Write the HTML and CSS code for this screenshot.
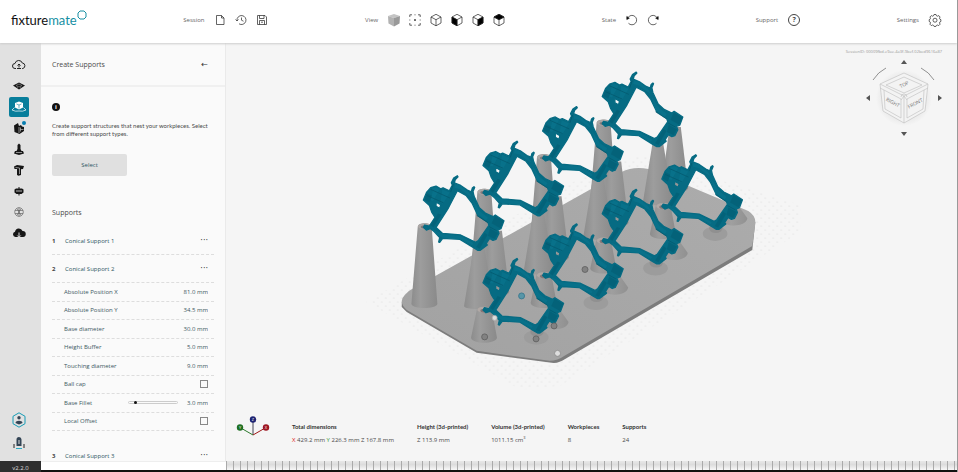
FILE: index.html
```
<!DOCTYPE html>
<html lang="en">
<head>
    <meta charset="UTF-8">
    <meta name="viewport" content="width=device-width, initial-scale=1.0">
    <title>fixturemate</title>
    <link rel="stylesheet" href="styles.css">
</head>
<body>

    <!-- Top bar -->
    <header class="topbar">
        <a class="logo" href="#">fixture<span>mate</span><svg width="10" height="10" viewBox="0 0 10 10"><path d="M3 1h4l2 2v4L7 9H3L1 7V3z"/></svg></a>

        <div class="tool-group">
            <span class="tool-label">Session</span>
            <button class="tool" aria-label="New session"><svg viewBox="0 0 12 12"><path d="M2.500 1.500h5l2.500 2.500v6.500h-7.500zM7.500 1.500V4H10"/></svg></button>
            <button class="tool" aria-label="History"><svg viewBox="0 0 12 12"><path d="M2 6.500A4.500 4.500 0 1 1 4 9.800M.5 5.500 2 7l1.500-1.500M6.500 3.500v2.700l2 1"/></svg></button>
            <button class="tool" aria-label="Save"><svg viewBox="0 0 12 12"><path d="M1.500 1.500h7.500l1.500 1.500v7.500h-9zM3.500 1.500V4.500h4.500v-3M3.500 10.500v-4h5v4M5 8.200h2"/></svg></button>
        </div>

        <div class="tool-group">
            <span class="tool-label">View</span>
            <button class="tool" aria-label="Shaded"><svg viewBox="0 0 12 12"><g stroke="none"><path fill="#c4c4c4" d="M0 2 6 0l6 2-6 2z"/><path fill="#b2b2b2" d="M0 2l6 2v8.500L.5 9.500z"/><path fill="#999" d="M12 2 6 4v8.500l5.500-3z"/></g></svg></button>
            <button class="tool" aria-label="Fit to screen"><svg viewBox="0 0 12 12"><path d="M.8 3V.8H3M9 .8h2.200V3M11.200 9v2.200H9M3 11.200H.8V9M5.500 .8h1M5.500 11.200h1M.8 5.500v1M11.200 5.500v1"/><circle cx="6" cy="6" r=".6" fill="#111"/></svg></button>
            <button class="tool" aria-label="Wireframe"><svg viewBox="0 0 12 12"><path d="M6 .3 11 3v6L6 11.800 1 9V3zM1 3l5 2.700L11 3M6 5.700v6"/></svg></button>
            <button class="tool" aria-label="Left view"><svg viewBox="0 0 12 12"><path d="M6 .3 11 3v6L6 11.800 1 9V3zM1 3l5 2.700L11 3M6 5.700v6"/><path fill="#000" d="M1 3l5 2.700v6L1 9z"/></svg></button>
            <button class="tool" aria-label="Right view"><svg viewBox="0 0 12 12"><path d="M6 .3 11 3v6L6 11.800 1 9V3zM1 3l5 2.700L11 3M6 5.700v6"/><path fill="#000" d="M11 3 6 5.700v6L11 9z"/></svg></button>
            <button class="tool" aria-label="Top view"><svg viewBox="0 0 12 12"><path d="M6 .3 11 3v6L6 11.800 1 9V3zM1 3l5 2.700L11 3M6 5.700v6"/><path fill="#000" d="M6 .3 11 3 6 5.700 1 3z"/></svg></button>
        </div>

        <div class="tool-group">
            <span class="tool-label">State</span>
            <button class="tool" aria-label="Undo"><svg viewBox="0 0 12 12"><path d="M2 3.500A4.700 4.700 0 1 1 2.500 9.300"/><path fill="#000" d="M.8 2.500v3l2.500-1.300z"/></svg></button>
            <button class="tool" aria-label="Redo"><svg viewBox="0 0 12 12"><path d="M10 3.500A4.700 4.700 0 1 0 9.500 9.300"/><path fill="#000" d="M11.200 2.500v3L8.700 4.200z"/></svg></button>
        </div>

        <div class="tool-group">
            <span class="tool-label">Support</span>
            <button class="tool help" aria-label="Help">?</button>
        </div>

        <div class="tool-group">
            <span class="tool-label">Settings</span>
            <button class="tool" aria-label="Settings"><svg viewBox="0 0 12 12"><path d="M5 .5h2l.5 1.300 1 .4 1.300-.6 1.300 1.400-.6 1.200.4 1 1 .5v1.700l-1 .5-.4 1 .6 1.300-1.400 1.400-1.200-.6-1 .4-.5 1H5l-.5-1-1-.4-1.200.6L.9 10.200l.6-1.300-.4-1-.9-.5V5.700l.9-.5.4-1L.9 3l1.400-1.400 1.200.6 1-.4z"/><circle cx="6" cy="6.200" r="2"/></svg></button>
        </div>
    </header>

    <!-- Workflow steps -->
    <nav class="rail">
        <button class="step" aria-label="Import"><svg viewBox="0 0 14 14"><path class="line" d="M4 10.500H3a2.500 2.500 0 0 1 0-5A3.800 3.800 0 0 1 10.300 5a2.800 2.800 0 0 1 .5 5.500H10M5 10.500h4M7 9.500V6.300M5.500 7.500 7 6l1.500 1.500"/></svg></button>
        <button class="step" aria-label="Base plate"><svg viewBox="0 0 14 14"><path d="M7 3.500l6 3L7 10.500 1 6.500z"/><path d="M4 6.500 7 5l3 1.500L7 8zM5 8.500l1-.5M9 8.500 8 8" stroke="#999" stroke-width=".6" fill="none"/></svg></button>
        <button class="step active" aria-label="Supports"><svg viewBox="0 0 14 14"><path d="M7 1.500 11 3v4.500L7 9.500 3 7.500V3z"/><path d="M4.500 4 7 5l2.500-1M7 5v3.500" stroke="#087e9b" stroke-width=".6" fill="none"/><path class="line" stroke-width=".7" d="M2.500 7.500 0 10l3.500 1.200L7 11l3.500.2L14 10l-2.500-2.500"/></svg></button>
        <button class="step" aria-label="Clamps"><svg viewBox="0 0 14 14"><path d="M2 4.500 6 2l1 3 2-1 1 1.500L12 6v4l-4.500 3-5-2z"/><path d="M7 6v6M8.500 8.500h3M8.500 6.500v4" stroke="#ddd" stroke-width=".6"/></svg><i class="badge"></i></button>
        <button class="step" aria-label="Pins"><svg viewBox="0 0 14 14"><path d="M7 1.500 8.500 3v4l1 2H11l1 2.500-5 1.500-5-1.500L3 9h1.500l1-2V3z"/><path d="M4 10.500h6" stroke="#ddd" stroke-width=".6"/></svg></button>
        <button class="step" aria-label="Text"><svg viewBox="0 0 14 14"><path d="M2 3.500 5 2l7 1-1 3-2 .3V12l-2.500.8L5 12V6L2.500 6z"/><path d="M3.500 4.500l4 .5v6" stroke="#ddd" stroke-width=".6" fill="none"/></svg></button>
        <button class="step" aria-label="Connectors"><svg viewBox="0 0 14 14"><path d="M2.500 5.500 4 4.500h6l1.500 1v3L9.500 10h-5l-2-1.500zM6.500 3h1v8.500h-1z"/><path d="M4 7h6" stroke="#ddd" stroke-width=".8"/></svg></button>
        <button class="step" aria-label="Infill"><svg viewBox="0 0 14 14"><circle class="thin" cx="7" cy="7" r="4.300"/><path class="thin" d="M3 5.500h8M3 8.500h8M5 3.500l4 7M9 3.500l-4 7M7 2.500v9"/></svg></button>
        <button class="step" aria-label="Export"><svg viewBox="0 0 14 14"><path d="M4 11H3.500a2.700 2.700 0 0 1-.5-5.300A3.900 3.900 0 0 1 10.500 5 3 3 0 0 1 11 11z"/><path d="M7 6.500v4.500M5.300 9.500 7 11.300l1.700-1.800" stroke="#ddd" fill="none"/></svg></button>
        <span class="rail-space"></span>
        <button class="step account" aria-label="Account"><svg class="big" viewBox="0 0 16 16"><path d="M8 .8 14 4.300v7.400L8 15.200 2 11.700V4.300z" fill="none" stroke="#159bb5" stroke-width="1"/><circle cx="8" cy="5.800" r="1.700" fill="#345"/><path d="M4.500 11c0-3 7-3 7 0L8 12.500z" fill="#345"/></svg></button>
        <button class="step" aria-label="Tour"><svg viewBox="0 0 14 14"><path d="M4.500 7V3.500a2.500 2.500 0 0 1 5 0V10h-5z" fill="#345"/><path d="M6.500 4h1v4h-1z" fill="#ddd"/><path d="M2 8v4M12 8v4" class="line"/><path d="M4 12.500h6" stroke="#29a9c4"/></svg></button>
    </nav>

    <!-- Supports panel -->
    <aside class="panel">
        <div class="panel-head">
            <h1>Create Supports</h1>
            <button class="plain" aria-label="Back">←</button>
        </div>
        <div class="panel-body">
            <span class="info">i</span>
            <p class="hint">Create support structures that nest your workpieces. Select from different support types.</p>
            <button class="select">Select</button>
            <h2>Supports</h2>

            <div class="support"><b>1</b><span>Conical Support 1</span><button class="plain" aria-label="More">···</button></div>
            <div class="support"><b>2</b><span>Conical Support 2</span><button class="plain" aria-label="More">···</button></div>
            <div class="fields">
                <div class="field"><label for="posX">Absolute Position X</label><input type="text" id="posX" value="81.0 mm"></div>
                <div class="field"><label for="posY">Absolute Position Y</label><input type="text" id="posY" value="34.5 mm"></div>
                <div class="field"><label for="base">Base diameter</label><input type="text" id="base" value="30.0 mm"></div>
                <div class="field"><label for="buffer">Height Buffer</label><input type="text" id="buffer" value="5.0 mm"></div>
                <div class="field"><label for="touch">Touching diameter</label><input type="text" id="touch" value="9.0 mm"></div>
                <div class="field"><label for="ball">Ball cap</label><input type="checkbox" id="ball"></div>
                <div class="field"><label for="fillet">Base Fillet</label><input type="range" id="fillet" min="0" max="30" value="3"><input type="text" value="3.0 mm" aria-label="Base Fillet value"></div>
                <div class="field"><label for="offset">Local Offset</label><input type="checkbox" id="offset"></div>
            </div>
            <div class="support last"><b>3</b><span>Conical Support 3</span><button class="plain" aria-label="More">···</button></div>
        </div>
    </aside>

    <!-- 3D view -->
    <main class="viewer">
        <svg class="scene" viewBox="225 43 732 418">
            <defs>
                <linearGradient id="shade">
                    <stop offset="0" stop-color="#8c8c8c"/>
                    <stop offset=".35" stop-color="#9d9d9d"/>
                    <stop offset="1" stop-color="#8a8a8a"/>
                </linearGradient>
                <linearGradient id="plate" x1="0" y1="1" x2="1" y2="0">
                    <stop offset="0" stop-color="#a2a2a2"/>
                    <stop offset="1" stop-color="#acacac"/>
                </linearGradient>
                <pattern id="dots" width="8" height="8" patternUnits="userSpaceOnUse">
                    <circle cx="1" cy="2" r=".5" fill="#d0d0d0"/>
                    <circle cx="5" cy="6" r=".5" fill="#d0d0d0"/>
                </pattern>

                <!-- Workpiece, drawn at three times its size -->
                <g id="piece" transform="scale(.3333)">
                    <path fill="#066b83" stroke="#066b83" stroke-width="4" stroke-linejoin="round" fill-rule="evenodd" d="M320 47 322 50 314 58 311 68 330 76 350 90 362 95 365 84 370 80 372 82 367 94 370 108 386 143 404 159 427 170 434 165 460 182 451 206 441 210 445 220 436 238 427 241 417 235 407 250 410 255 389 271 382 271 370 264 328 238 276 235 267 247 264 246 267 233 251 215 241 207 238 206 227 210 218 202 222 195 236 198 253 172 243 156 236 136 218 120 228 96 240 83 256 78 270 86 277 83 296 92 305 75 302 68 309 54zM320 92 298 134 292 146 256 202 275 220 330 225 375 247 383 242 415 196 412 187 382 167 364 129 346 106zM256 126 270 134 267 145 256 139z"/>
                    <path fill="#0d7f99" d="M242 86l13-5 12 6-20 36-8-3 7-25zM275 88l22 9-20 34-8-4zM313 72l16 5 26 20 9 14-12-6-23-18-18-4zM366 120l24 36 22 17-6 8-28-20zM244 207l34 15 52 5 38 23-4 6-34-18-54-5-17-9z" opacity=".35"/>
                    <path fill="#035468" d="M433 168l26 15-10 22-26-15zM418 205l24 14-10 18-20-10zM228 99l16 8-8 20-15-8zM262 160l10 4-24 38-8-6zM402 218l9 6-24 42-10-5z" opacity=".35"/>
                    <path fill="none" stroke="#03566b" stroke-width="2" d="M240 88l58 26M228 106l50 22M378 166l34 22M416 200l22 12M300 96l8-24"/>
                </g>

                <!-- Pillars below a workpiece of the rear row -->
                <g id="pillars" transform="scale(.3333)">
                    <path fill="url(#shade)" d="M420 212h34l22 184c-6 18-74 18-80 0z"/>
                    <path fill="url(#shade)" d="M370 255h30l30 176c-6 20-84 20-90 8z"/>
                </g>
                <g id="tall" transform="scale(.3333)">
                    <path fill="url(#shade)" d="M201 200c0-14 42-14 42 0l17 232c-4 16-74 16-78 0z"/>
                    <ellipse cx="222" cy="199" rx="20" ry="9" fill="#aca7a5"/>
                    <ellipse cx="223" cy="201" rx="13" ry="5" fill="#83797a"/>
                </g>

                <!-- Short supports of the front row -->
                <g id="feet" transform="scale(.3333)">
                    <ellipse cx="378" cy="284" rx="37" ry="22" fill="#9c9c9c"/>
                    <ellipse cx="380" cy="268" rx="20" ry="14" fill="#909090"/>
                    <path fill="url(#shade)" d="M420 200h28l27 38c-5 28-72 28-76 4z" opacity=".8"/>
                </g>
                <g id="short" transform="scale(.3333)">
                    <path fill="url(#shade)" d="M199 203c0-15 46-15 46 0l15 82c-4 20-74 20-78 0z"/>
                    <ellipse cx="222" cy="201" rx="21" ry="9" fill="#b0a8a5"/>
                    <ellipse cx="224" cy="204" rx="14" ry="6" fill="#857778"/>
                </g>
            </defs>

            <path fill="url(#dots)" d="M365 302 590 172 640 155 800 205 800 232 560 386 520 390z"/>

            <path fill="#7c7c7c" d="M401 302v5l5 5 70 41 75 10q7 1 14-4L752 250l3-28z"/>
            <path fill="url(#plate)" d="M404 295q3-4 9-7L621 172q12-6 27-3l100 42q8 5 7 13l-3 22L564 356q-7 5-15 5l-73-10-70-41q-9-8-2-15z"/>

            <!-- Rear row, far to near -->
            <use href="#pillars" x="529.100" y="56.200"/>
            <use href="#tall" x="529.100" y="56.200"/>
            <use href="#piece" x="529.100" y="56.200"/>
            <use href="#pillars" x="469.400" y="90.800"/>
            <use href="#tall" x="469.400" y="90.800"/>
            <use href="#piece" x="469.400" y="90.800"/>
            <use href="#pillars" x="409.700" y="125.400"/>
            <use href="#tall" x="409.700" y="125.400"/>
            <use href="#piece" x="409.700" y="125.400"/>
            <use href="#pillars" x="350" y="160"/>
            <use href="#tall" x="350" y="160"/>
            <use href="#piece" x="350" y="160"/>

            <!-- Front row, far to near -->
            <use href="#feet" x="588.800" y="139"/>
            <use href="#short" x="588.800" y="139"/>
            <use href="#piece" x="588.800" y="139"/>
            <use href="#feet" x="529.100" y="173.600"/>
            <use href="#short" x="529.100" y="173.600"/>
            <use href="#piece" x="529.100" y="173.600"/>
            <use href="#feet" x="469.400" y="208.200"/>
            <use href="#short" x="469.400" y="208.200"/>
            <use href="#piece" x="469.400" y="208.200"/>
            <use href="#feet" x="409.700" y="242.800"/>
            <use href="#short" x="409.700" y="242.800"/>
            <use href="#piece" x="409.700" y="242.800"/>

            <!-- Handles -->
            <g fill="#828282" stroke="#5e5e5e" stroke-width=".8">
                <circle cx="521" cy="296" r="3" fill="#5796a8" stroke="#33748a"/>
                <circle cx="584.500" cy="269.500" r="3"/>
                <circle cx="484" cy="337" r="3"/>
                <circle cx="535.500" cy="339" r="3"/>
                <circle cx="553.500" cy="326" r="3"/>
                <circle cx="557" cy="353.500" r="3" fill="#ddd" stroke="#888"/>
                <circle cx="494" cy="318" r="2.500" fill="#ddd" stroke="#aaa"/>
            </g>
        </svg>

        <div class="compass">
            <span>SessionID: 00009fbd-e9ae-4a3f-9bef-02bed9616a87</span>
            <svg width="76" height="76" viewBox="866 60 76 76">
                <defs><radialGradient id="halo"><stop offset=".6" stop-color="#e2e2e2"/><stop offset="1" stop-color="#f5f5f5"/></radialGradient></defs>
                <circle cx="904" cy="98" r="28" fill="url(#halo)"/>
                <g fill="#f3f3f3" stroke="#c4c4c4" stroke-width=".7">
                    <path d="M904 73 928 84 925 111 904 123 883 111 880 84z"/>
                    <path d="M880 84l24 12 24-12M904 96v27" fill="none"/>
                    <path d="M904 77l18 8-18 8-18-8zM884 90l17 9v19l-16-9zM924 90l-17 9v19l16-9z"/>
                    <path d="M880 88l4 2M928 88l-4 2M901 97a3 3 0 0 1 6 0M904 96l-3 4M904 96l3 4" fill="none"/>
                </g>
                <g fill="#555">
                    <path d="M904 60l3 4h-6zM904 136l3-4h-6zM866 98l4-3v6zM942 98l-4-3v6z"/>
                </g>
                <path d="M873 80q5-8 13-12M934 80q-5-8-13-12" fill="none" stroke="#777" stroke-width=".8"/>
                <text transform="translate(892 104) rotate(28)" text-anchor="middle">RIGHT</text>
                <text transform="translate(916 105) rotate(-28)" text-anchor="middle">FRONT</text>
                <text transform="translate(905 86) rotate(-28)" text-anchor="middle">TOP</text>
            </svg>
        </div>

        <div class="stats">
            <svg width="34" height="22" viewBox="236 413 34 22">
                <path d="M253 433v-15" stroke="#445"/><path d="M253 433l-13-7.500" stroke="#2d7a2d"/><path d="M253 433l13-7.500" stroke="#a01818"/>
                <circle cx="253" cy="417.500" r="3.200" fill="#1c2272"/><circle cx="240" cy="425.500" r="3.200" fill="#1d6f22"/><circle cx="266" cy="425.500" r="3.200" fill="#9c1420"/>
                <g class="axis"><text x="253" y="419">Z</text><text x="240" y="427">Y</text><text x="266" y="427">X</text></g>
            </svg>
            <dl>
                <div><dt>Total dimensions</dt><dd><span class="x">X</span> 429.2 mm <span class="y">Y</span> 226.3 mm Z 167.8 mm</dd></div>
                <div><dt>Height (3d-printed)</dt><dd>Z 113.9 mm</dd></div>
                <div><dt>Volume (3d-printed)</dt><dd>1011.15 cm<sup>3</sup></dd></div>
                <div><dt>Workpieces</dt><dd>8</dd></div>
                <div><dt>Supports</dt><dd>24</dd></div>
            </dl>
        </div>
    </main>

    <!-- Bottom strip -->
    <footer class="version">v2.2.0</footer>
    <div class="strip"></div>
    <div class="ruler"></div>

</body>
</html>
```
FILE: styles.css
```
* {
    box-sizing: border-box;
}

body {
    display: grid;
    grid-template-columns: 41px 185px 1fr;
    grid-template-rows: 43px minmax(0, 1fr) 11px;
    height: 100vh;
    margin: 0;
    overflow: hidden;
    border-right: 1px solid #999;
    background: #f5f5f5;
    color: #4a4a4a;
    font: 6px/8px "Open Sans", "Noto Sans", sans-serif;
}

button,
input {
    margin: 0;
    padding: 0;
    border: none;
    background: none;
    color: inherit;
    font: inherit;
}

button {
    cursor: pointer;
}

/* Top bar */
.topbar {
    grid-column: 1 / -1;
    z-index: 1;
    display: flex;
    align-items: center;
    justify-content: space-between;
    padding: 0 16px 4px 11px;
    background: #fff;
    box-shadow: 0 1px 2px #ccc;
}

.logo {
    display: flex;
    align-items: center;
    padding-top: 1px;
    color: #111;
    font-family: Lato, sans-serif;
    font-size: 13px;
    line-height: 20px;
    text-decoration: none;
}

.logo span {
    color: #168fa3;
}

.logo svg {
    align-self: flex-start;
    fill: none;
    stroke: #168fa3;
}

.tool-group {
    display: flex;
    align-items: center;
    gap: 9px;
}

.tool-label {
    margin-right: 1px;
    color: #666;
}

.tool {
    width: 12px;
    height: 12px;
}

.tool svg {
    display: block;
    overflow: visible;
    fill: none;
    stroke: #222;
    stroke-width: 0.7;
}

.help {
    border: 1px solid #444;
    border-radius: 50%;
    font-size: 7px;
    font-weight: bold;
}

/* Workflow steps */
.rail {
    display: flex;
    flex-direction: column;
    align-items: center;
    gap: 1px;
    padding: 12px 3px 8px 0;
    background: #e1e1e1;
}

.step {
    position: relative;
    display: grid;
    place-items: center;
    width: 20px;
    height: 20px;
    border-radius: 2px;
    flex-shrink: 0;
}

.step svg {
    width: 14px;
    height: 14px;
    fill: #161616;
}

.step .big {
    width: 16px;
    height: 16px;
}

.account {
    margin-bottom: 2px;
}

.step .line {
    fill: none;
    stroke: #222;
}

.step .thin {
    fill: none;
    stroke: #555;
    stroke-width: 0.6;
}

.step.active {
    background: #087e9b;
}

.active svg {
    fill: #fff;
}

.step.active .line {
    stroke: #fff;
}

.badge {
    position: absolute;
    top: 3px;
    right: 3px;
    width: 4px;
    height: 4px;
    border-radius: 50%;
    background: #087eb0;
}

.rail-space {
    flex: 1;
}

/* Supports panel */
.panel {
    display: flex;
    flex-direction: column;
    overflow: hidden;
    border-right: 1px solid #eaeaea;
    background: #fafafa;
}

.panel-head {
    display: flex;
    align-items: center;
    justify-content: space-between;
    height: 44px;
    padding: 2px 17px 0 11px;
    border-bottom: 2px solid #f0f0f0;
    flex-shrink: 0;
}

.plain {
    color: #333;
    font: 8px/8px "DejaVu Sans", sans-serif;
}

h1,
h2 {
    margin: 0;
    font-size: 7px;
    font-weight: normal;
    line-height: 10px;
}

.panel-body {
    padding: 16px 11px 0;
}

.info {
    display: block;
    width: 8px;
    height: 8px;
    border-radius: 50%;
    background: #111;
    color: #fff;
    font-weight: bold;
    text-align: center;
}

.hint {
    margin: 11px 0 16px;
    font-family: Lato, sans-serif;
}

.select {
    width: 75px;
    height: 22px;
    margin-bottom: 32px;
    border-radius: 2px;
    background: #e0e0e0;
    color: #2c5561;
}

.support {
    display: flex;
    align-items: center;
    height: 28px;
    padding-right: 6px;
    border-bottom: 1px dashed #ddd;
    color: #2c5561;
}

h2 + .support {
    margin-top: 9px;
}

.support b {
    width: 13px;
    color: #444;
}

.support span {
    flex: 1;
}

.last {
    margin-top: 11px;
}

.fields {
    display: grid;
    grid-auto-rows: 1fr;
    height: 148px;
}

.field {
    display: flex;
    align-items: center;
    padding: 0 6px 0 12px;
    border-bottom: 1px dashed #ddd;
    color: #3c5962;
}

.field label {
    flex: 1;
}

.field input[type="text"] {
    width: 30px;
    height: 8px;
    text-align: right;
}

.field input[type="checkbox"] {
    appearance: none;
    width: 8px;
    height: 8px;
    border: 1px solid #888;
}

.field input[type="range"] {
    appearance: none;
    width: 50px;
    height: 3px;
    border: 1px solid #ccc;
    border-radius: 2px;
}

input[type="range"]::-webkit-slider-thumb {
    appearance: none;
    width: 3px;
    height: 3px;
    border-radius: 50%;
    background: #111;
}

/* 3D view */
.viewer {
    display: grid;
    grid-template: minmax(0, 1fr) / minmax(0, 1fr);
    min-height: 0;
}

.viewer > * {
    grid-area: 1 / 1;
}

.scene {
    width: 100%;
    height: 100%;
}

.compass {
    z-index: 1;
    display: flex;
    flex-direction: column;
    align-items: flex-end;
    justify-self: end;
    align-self: start;
    gap: 4px;
    padding: 5px 15px 0 0;
    color: #999;
    font-size: 4px;
}

.compass text {
    fill: #777;
    font-size: 5px;
}

.stats {
    z-index: 1;
    display: flex;
    align-self: end;
    gap: 22px;
    padding: 0 10px 17px;
}

.axis {
    fill: #fff;
    font-size: 4px;
    text-anchor: middle;
}

dl {
    display: flex;
    gap: 23px;
    margin: 8px 0 0;
}

dt {
    margin-bottom: 5px;
    color: #333;
    font-family: Lato, sans-serif;
    font-weight: bold;
}

dd {
    margin: 0;
}

sup {
    font-size: 4px;
    line-height: 4px;
}

.x {
    color: #d22;
}

.y {
    color: #3a9a3a;
}

/* Bottom strip */
.version {
    background: #2e2e2e;
    color: #ddd;
    line-height: 14px;
    text-align: center;
}

.strip {
    border-top: 1px solid #eee;
    border-bottom: 2px solid #111;
    background: #fff;
}

.ruler {
    border-bottom: 2px solid #111;
    background:
        repeating-linear-gradient(90deg, #aaa 0 1px, transparent 1px 7px),
        linear-gradient(#e8e8e8, #dcdcdc 40%, #f8f8f8);
}
```
